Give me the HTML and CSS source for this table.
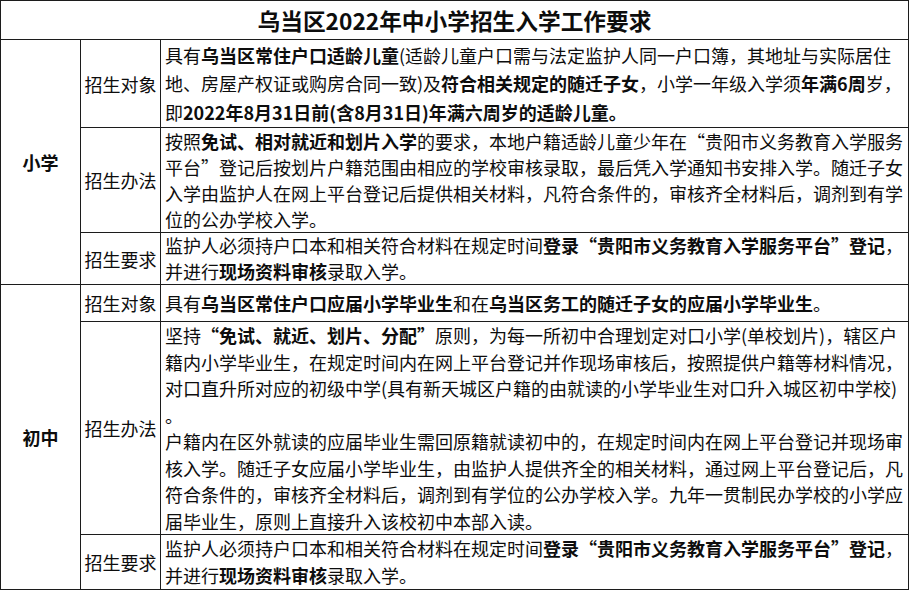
FILE: index.html
```html
<!DOCTYPE html>
<html lang="zh-CN">
<head>
<meta charset="utf-8">
<title>乌当区2022年中小学招生入学工作要求</title>
<link rel="stylesheet" href="styles.css">
</head>
<body>
<div class="sheet">
  <div class="cell title">乌当区2022年中小学招生入学工作要求</div>

  <div class="cell level level-primary">小学</div>
  <div class="cell item row1">招生对象</div>
  <div class="cell text row1 lh29">
    <p>具有<b>乌当区常住户口适龄儿童</b>(适龄儿童户口需与法定监护人同一户口簿，其地址与实际居住<br>地、房屋产权证或购房合同一致)及<b>符合相关规定的随迁子女</b>，小学一年级入学须<b>年满6周</b>岁，<br>即<b>2022年8月31日前(含8月31日)年满六周岁的适龄儿童。</b></p>
  </div>

  <div class="cell item row2">招生办法</div>
  <div class="cell text row2 lh26">
    <p>按照<b>免试、相对就近和划片入学</b>的要求，本地户籍适龄儿童少年在“贵阳市义务教育入学服务<br>平台”登记后按划片户籍范围由相应的学校审核录取，最后凭入学通知书安排入学。随迁子女<br>入学由监护人在网上平台登记后提供相关材料，凡符合条件的，审核齐全材料后，调剂到有学<br>位的公办学校入学。</p>
  </div>

  <div class="cell item row3">招生要求</div>
  <div class="cell text row3 lh255">
    <p>监护人必须持户口本和相关符合材料在规定时间<b>登录“贵阳市义务教育入学服务平台”登记</b>，<br>并进行<b>现场资料审核</b>录取入学。</p>
  </div>

  <div class="cell level level-junior">初中</div>
  <div class="cell item row4">招生对象</div>
  <div class="cell text row4 lh26">
    <p>具有<b>乌当区常住户口应届小学毕业生</b>和在<b>乌当区务工的随迁子女的应届小学毕业生</b>。</p>
  </div>

  <div class="cell item row5">招生办法</div>
  <div class="cell text row5 lh265">
    <p>坚持<b>“免试、就近、划片、分配”</b>原则，为每一所初中合理划定对口小学(单校划片)，辖区户<br>籍内小学毕业生，在规定时间内在网上平台登记并作现场审核后，按照提供户籍等材料情况，<br>对口直升所对应的初级中学(具有新天城区户籍的由就读的小学毕业生对口升入城区初中学校)<br>。<br>户籍内在区外就读的应届毕业生需回原籍就读初中的，在规定时间内在网上平台登记并现场审<br>核入学。随迁子女应届小学毕业生，由监护人提供齐全的相关材料，通过网上平台登记后，凡<br>符合条件的，审核齐全材料后，调剂到有学位的公办学校入学。九年一贯制民办学校的小学应<br>届毕业生，原则上直接升入该校初中本部入读。</p>
  </div>

  <div class="cell item row6">招生要求</div>
  <div class="cell text row6 lh27">
    <p>监护人必须持户口本和相关符合材料在规定时间<b>登录“贵阳市义务教育入学服务平台”登记</b>，<br>并进行<b>现场资料审核</b>录取入学。</p>
  </div>
</div>
</body>
</html>
```

FILE: styles.css
```css
html, body {
  margin: 0;
  padding: 0;
  background: #ffffff;
}

body {
  font-family: "Noto Sans CJK SC", "Noto Sans", sans-serif;
  color: #0d0d0d;
}

.sheet {
  width: 909px;
  height: 590px;
  box-sizing: border-box;
  display: grid;
  grid-template-columns: 79px 79px 747px;
  grid-template-rows: 38px 87px 104px 51px 36px 212px 54px;
  gap: 1px;
  padding: 1px;
  background: #1c1c1c;
}

.cell {
  background: #ffffff;
  display: flex;
  align-items: center;
  min-width: 0;
}

.title {
  grid-column: 1 / 4;
  justify-content: center;
  font-size: 22.7px;
  font-weight: 700;
  line-height: 30px;
  padding-top: 1px;
}

.level {
  grid-column: 1;
  justify-content: center;
  font-size: 18px;
  font-weight: 700;
}

.level-primary { grid-row: 2 / 5; }
.level-junior { grid-row: 5 / 8; }

.item {
  grid-column: 2;
  justify-content: center;
  font-size: 18px;
  white-space: nowrap;
}

.text {
  grid-column: 3;
  font-size: 18px;
  white-space: nowrap;
  padding-left: 4px;
}

.text p {
  margin: 0;
}

.text b {
  font-weight: 700;
}

.row1 { grid-row: 2; }
.row2 { grid-row: 3; }
.row3 { grid-row: 4; }
.row4 { grid-row: 5; }
.row5 { grid-row: 6; }
.row6 { grid-row: 7; }

.lh29 { line-height: 28.6px; }
.lh26 { line-height: 26px; }
.lh255 { line-height: 25.5px; }
.lh265 { line-height: 26.5px; }
.lh27 { line-height: 27px; }
```
